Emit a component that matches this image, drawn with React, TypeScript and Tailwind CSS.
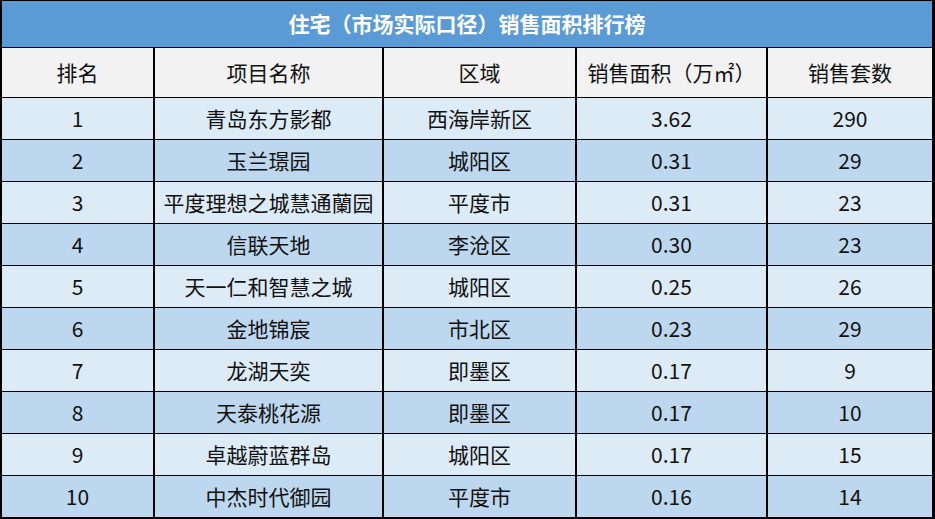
import React from "react";

const rows = [
  ["1", "青岛东方影都", "西海岸新区", "3.62", "290"],
  ["2", "玉兰璟园", "城阳区", "0.31", "29"],
  ["3", "平度理想之城慧通蘭园", "平度市", "0.31", "23"],
  ["4", "信联天地", "李沧区", "0.30", "23"],
  ["5", "天一仁和智慧之城", "城阳区", "0.25", "26"],
  ["6", "金地锦宸", "市北区", "0.23", "29"],
  ["7", "龙湖天奕", "即墨区", "0.17", "9"],
  ["8", "天泰桃花源", "即墨区", "0.17", "10"],
  ["9", "卓越蔚蓝群岛", "城阳区", "0.17", "15"],
  ["10", "中杰时代御园", "平度市", "0.16", "14"],
];

const headers = ["排名", "项目名称", "区域", "销售面积（万㎡）", "销售套数"];

export default function App() {
  return (
    <div
      className="w-[935px] h-[519px] bg-white"
      style={{ fontFamily: '"Noto Sans CJK SC", "Noto Sans", sans-serif' }}
    >
      <div className="grid h-full grid-cols-[151px_227px_191px_189px_164px] grid-rows-[46px_49px_repeat(10,41px)] gap-x-[2px] gap-y-[1px] bg-black pt-[1px] pl-[2px] pr-[3px] pb-[2px] text-[21px] text-[#111]">
        <div className="col-span-5 flex items-center justify-center bg-[#5b9bd5] font-bold text-white text-[21px]">
          住宅（市场实际口径）销售面积排行榜
        </div>

        {headers.map((h) => (
          <div key={h} className="flex items-center justify-center bg-[#f2f2f2]">
            {h}
          </div>
        ))}

        {rows.map((row, i) =>
          row.map((cell, j) => (
            <div
              key={`${i}-${j}`}
              className={`flex items-center justify-center ${
                i % 2 === 0 ? "bg-[#ddebf7]" : "bg-[#bdd7ee]"
              }`}
            >
              {cell}
            </div>
          ))
        )}
      </div>
    </div>
  );
}
